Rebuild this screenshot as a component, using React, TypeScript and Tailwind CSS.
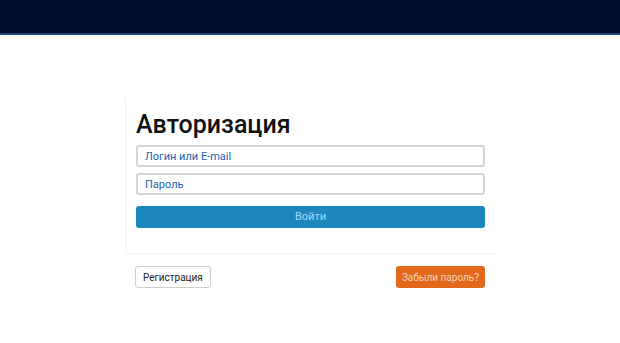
export default function App() {
  return (
    <div className="min-h-[343px] bg-white" style={{ fontFamily: 'Roboto, "Noto Sans", sans-serif' }}>
      <header className="h-[35px] bg-[#000f2b] border-b-2 border-[#1e4679]" />

      <main className="mx-auto mt-[63px] w-[370px]">
        <div className="border-l border-b border-[#eef0f4] rounded-bl-[4px] pl-[10px] pr-[10px] pt-[10px] pb-[25px]">
          <h1 className="text-[25px] leading-[34px] font-medium text-[#111] mb-[3px]">Авторизация</h1>

          <form className="flex flex-col">
            <input
              className="h-[22px] w-full rounded-[3px] border-2 border-[#d4d4d4] bg-white px-[7px] text-[11px] text-[#1d5fae] placeholder:text-[#1d5fae] outline-none"
              placeholder="Логин или E-mail"
            />
            <input
              type="text"
              className="mt-[6px] h-[22px] w-full rounded-[3px] border-2 border-[#d4d4d4] bg-white px-[7px] text-[11px] text-[#1d5fae] placeholder:text-[#1d5fae] outline-none"
              placeholder="Пароль"
            />
            <button
              type="button"
              className="mt-[11px] h-[22px] w-full rounded-[3px] bg-[#1c87bd] text-[11px] text-[#a9d6ee]"
            >
              Войти
            </button>
          </form>
        </div>

        <div className="mt-[12px] flex justify-between px-[10px]">
          <button className="h-[22px] rounded-[3px] border border-[#cfcfcf] bg-white px-[7px] text-[10px] text-[#222]">
            Регистрация
          </button>
          <button className="h-[22px] rounded-[3px] bg-[#e2691b] px-[6px] text-[10px] text-[#f7d2b4]">
            Забыли пароль?
          </button>
        </div>
      </main>
    </div>
  );
}
